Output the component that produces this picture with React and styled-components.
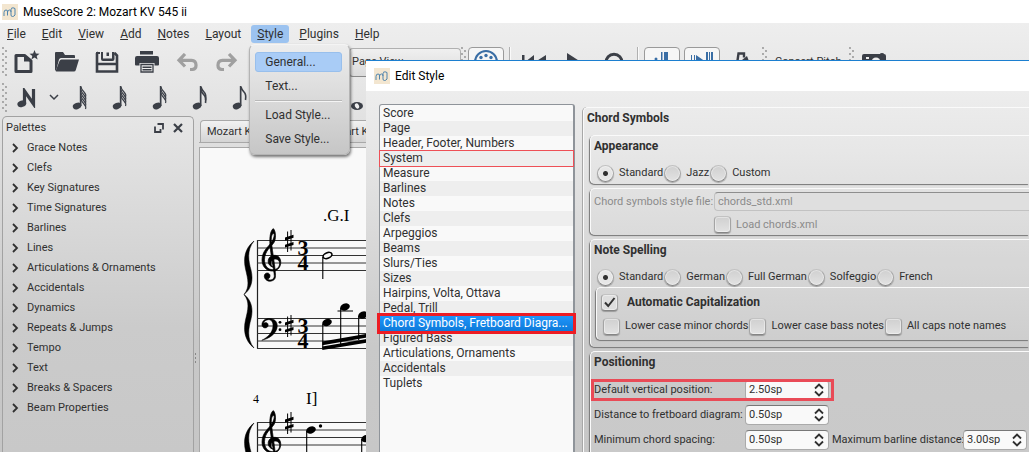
import React from 'react';
import styled, { createGlobalStyle, css } from 'styled-components';

const ui = 'Roboto, "Open Sans", Tahoma, sans-serif';
const ink = '#303030';
const icon = '#3b3f47';
const accent = '#3a6ea5';
const alertRed = '#e94b57';

const GlobalStyle = createGlobalStyle`
  *, *::before, *::after { box-sizing: border-box; }
  body { margin: 0; font: 12px/16px ${ui}; color: ${ink}; overflow: hidden; }
  button, input, select { font: inherit; color: inherit; margin: 0; }
  ul { list-style: none; margin: 0; padding: 0; }
  h2, h3 { margin: 0; font-size: 12px; line-height: 16px; font-weight: 700; }
`;

/* ---------- main window ---------- */

const Window = styled.div`
  position: relative;
  display: flex;
  flex-direction: column;
  height: 100vh;
  overflow: hidden;
  background: linear-gradient(#eeeeee 23px, #e0e0e0 130px, #c8c8c8 340px, #c6c6c6);
`;

const TitleBar = styled.header`
  display: flex;
  align-items: center;
  flex: none;
  gap: 5px;
  height: ${p => p.$height}px;
  padding-left: ${p => p.$inset}px;
  background: #fff;
  color: #000;
  white-space: nowrap;
`;

const MenuBar = styled.nav`
  display: flex;
  flex: none;
  gap: 4px;
  height: 21px;
  padding: 2px 1px 0;
`;

const MenuSlot = styled.div`
  position: relative;
`;

const MenuTitle = styled.button`
  height: 18px;
  padding: 0 6px;
  border: 0;
  border-radius: 3px;
  line-height: 18px;
  background: ${p => (p.$open ? '#9cc3f0' : 'transparent')};
`;

const Popup = styled.div`
  position: absolute;
  z-index: 2;
  top: 19px;
  left: -2px;
  display: flex;
  flex-direction: column;
  width: 101px;
  padding: 7px 7px 1px 5px;
  border: 1px solid #b4b4b4;
  border-top-color: #f4f4f4;
  border-radius: 6px;
  background: linear-gradient(#ededed, #c6c6c6);
  box-shadow: 1px 2px 3px #0008;
`;

const PopupItem = styled.button`
  height: 20px;
  margin-bottom: 4px;
  padding: 0 0 0 9px;
  border: 1px solid ${p => (p.$active ? '#98bfec' : 'transparent')};
  border-radius: 3px;
  background: ${p => (p.$active ? '#a9ccf6' : 'transparent')};
  text-align: left;
  white-space: nowrap;
`;

const PopupRule = styled.hr`
  width: 100%;
  height: 2px;
  margin: 0 0 3px;
  border: 0;
  border-top: 1px solid #b8b8b8;
  border-bottom: 1px solid #f4f4f4;
`;

const ToolBar = styled.div`
  display: flex;
  flex: none;
  align-items: center;
  height: 36px;
  padding-left: 2px;
`;

const GripBox = styled.svg`
  flex: none;
  width: 5px;
  height: 30px;
  fill: #8c8c8c;
`;

const ToolButton = styled.button`
  display: flex;
  flex: none;
  align-items: center;
  justify-content: center;
  width: 36px;
  height: 30px;
  margin: 0 2px;
  padding: 0;
  border: 0;
  border-radius: 4px;
  background: none;
  color: ${p => (p.$muted ? '#a0a0a0' : icon)};
  ${p => p.$on && css`
    border: 1px solid #9a9a9a;
    background: #f6f6f6;
    color: ${accent};
  `}
`;

const ToolText = styled.button`
  flex: none;
  width: 82px;
  height: 30px;
  padding: 0 0 0 8px;
  border: 0;
  background: none;
  font-size: 11px;
  text-align: left;
`;

const ToolRule = styled.span`
  flex: none;
  width: 2px;
  height: 30px;
  margin: 0 3px;
  border-left: 1px solid #b0b0b0;
  border-right: 1px solid #fafafa;
`;

const ToolSelect = styled.select`
  flex: none;
  appearance: none;
  width: ${p => p.$width}px;
  height: 29px;
  margin-left: 2px;
  padding: 0 0 0 2px;
  border: 1px solid #b0b0b0;
  border-bottom-color: #888;
  border-radius: 4px;
  background: linear-gradient(#f0f0f0, #dadada);
  font-size: 11px;
`;

const NoteMenu = styled.button`
  width: 13px;
  height: 30px;
  padding: 0;
  border: 0;
  background: none;
  color: ${icon};
`;

const Workspace = styled.main`
  display: flex;
  flex: 1;
  min-height: 0;
`;

const Dock = styled.aside`
  flex: none;
  width: 192px;
  margin-left: 2px;
  border: 1px solid #a2a2a2;
  border-bottom: 0;
  border-radius: 5px 5px 0 0;
  background: linear-gradient(#e6e6e6, #cbcbcb 210px, #c8c8c8);
`;

const DockHead = styled.div`
  display: flex;
  align-items: center;
  gap: 3px;
  height: 21px;
  padding: 0 7px 0 3px;
  font-size: 11px;
`;

const DockTitle = styled.span`
  flex: 1;
`;

const DockButton = styled.button`
  width: 16px;
  height: 16px;
  padding: 0;
  border: 0;
  background: none;
  line-height: 0;
  color: ${icon};
`;

const PaletteRow = styled.button`
  display: flex;
  align-items: center;
  gap: 6px;
  width: 100%;
  height: 20px;
  padding: 0 0 0 8px;
  border: 0;
  background: none;
  font-size: 11px;
`;

const Splitter = styled.div`
  display: flex;
  align-items: center;
  width: 5px;
  padding-top: 148px;
`;

const Documents = styled.section`
  display: flex;
  flex: 1;
  flex-direction: column;
  min-width: 0;
`;

const TabBar = styled.div`
  display: flex;
  flex: none;
  height: 27px;
  padding: 4px 0 0 1px;
  border-bottom: 1px solid #a8a8a8;
`;

const Tab = styled.button`
  width: 117px;
  padding: 0 0 0 6px;
  border: 1px solid #a8a8a8;
  border-bottom: 0;
  border-radius: 4px 4px 0 0;
  background: linear-gradient(#f2f2f2, #d4d4d4);
  font-size: 11px;
  text-align: left;
  white-space: nowrap;
`;

const Canvas = styled.div`
  flex: 1;
  min-height: 0;
  margin-top: 4px;
  overflow: hidden;
  border-top: 1px solid #a8a8a8;
  border-left: 1px solid #a8a8a8;
  background: #f9f9f9;
`;

/* ---------- dialog ---------- */

const Dialog = styled.section`
  position: absolute;
  z-index: 1;
  top: 60px;
  right: 0;
  bottom: 0;
  left: 366px;
  display: flex;
  flex-direction: column;
  overflow: hidden;
  border-top: 1px solid #1c7fd0;
  background: linear-gradient(#ededed 30px, #e6e6e6 90px, #c9c9c9 285px, #c7c7c7);
`;

const DialogBody = styled.div`
  display: flex;
  flex: 1;
  gap: 8px;
  min-height: 0;
  padding: 13px 0 0 13px;
`;

const PageList = styled.ul`
  flex: none;
  width: 196px;
  border: 1px solid #8f949a;
  border-width: 1px 2px 0 1px;
  border-radius: 3px 3px 0 0;
  background: #f9f9f9;
  padding-top: 1px;
`;

const PageItem = styled.li`
  height: 15px;
  padding-left: 3px;
  line-height: 15px;
  white-space: nowrap;
  &:nth-child(even) { background: #eeeeee; }
  ${p => p.$marked && css`
    position: relative;
    outline: 1px solid #ee5057;
  `}
  && {
    ${p => p.$selected && css`
      position: relative;
      outline: 3px solid #ed1c24;
      background: linear-gradient(#1f95fb, #0d7ada);
      color: #fff;
    `}
  }
`;

const PagePanel = styled.div`
  flex: 1;
  min-width: 0;
  margin-top: 3px;
  padding: 2px 0 0 4px;
  border: 1px solid #fafafa;
  border-width: 1px 0 0 1px;
  border-radius: 5px 0 0 0;
  box-shadow: -1px 0 0 #a8a8a8;
  font-size: 11px;
`;

const Group = styled.fieldset`
  min-width: 0;
  margin: 0 0 4px 2px;
  padding: 0 0 ${p => p.$foot || 0}px 3px;
  border: 1px solid #fafafa;
  border-width: 1px 0 0 1px;
  border-radius: 5px 0 0 5px;
  background: #ffffff0c;
  box-shadow: -1px 1px 1px #777;
`;

const GroupTitle = styled.h3`
  padding-top: 2px;
  height: 27px;
`;

const PanelTitle = styled.h2`
  margin-left: -1px;
  height: 25px;
`;

const Choices = styled.div`
  display: flex;
  align-items: center;
  gap: 1px;
  height: ${p => p.$height || 20}px;
  padding-left: ${p => p.$indent || 0}px;
`;

const Choice = styled.label`
  display: flex;
  align-items: center;
  gap: 5px;
  white-space: nowrap;
  ${p => p.$strong && css`
    gap: 9px;
    font-size: 12px;
    font-weight: 700;
  `}
  ${p => p.$muted && css`color: #8b8b8b;`}
`;

const knob = css`
  appearance: none;
  flex: none;
  width: 17px;
  height: 17px;
  border: 1px solid #a4a4a4;
  border-top-color: #c2c2c2;
  border-bottom-color: #858585;
  background: linear-gradient(#d0d0d0, #e2e2e2);
  box-shadow: 0 1px 1px #0004, inset 0 0 0 1px #ffffff66;
`;

const Radio = styled.input.attrs({ type: 'radio' })`
  ${knob}
  border-radius: 50%;
  &:checked {
    background: radial-gradient(circle, ${ink} 2px, #e6e6e6 3px);
  }
`;

const Check = styled.input.attrs({ type: 'checkbox' })`
  ${knob}
  border-radius: 4px;
  &:checked {
    background: url('data:image/svg+xml,<svg xmlns="http://www.w3.org/2000/svg" viewBox="0 0 15 15"><path d="M3 7.5 6.2 11 12.5 3" fill="none" stroke="%23333" stroke-width="2"/></svg>') #dedede;
  }
`;

const FileGrid = styled.div`
  display: grid;
  grid-template-columns: 117px 1fr;
  column-gap: 3px;
  row-gap: 5px;
  align-items: center;
  padding-top: 3px;
  color: #8b8b8b;
  white-space: nowrap;
`;

const FileField = styled.input`
  width: 100%;
  height: 19px;
  padding: 0 3px;
  border: 1px solid #c2c2c2;
  border-width: 1px 0 1px 1px;
  border-top-color: #8e8e8e;
  border-radius: 4px 0 0 4px;
  background: #dfdfdf;
`;

const FieldRow = styled.div`
  display: flex;
  align-items: center;
  margin-bottom: 3px;
`;

const Field = styled.div`
  display: flex;
  flex: none;
  align-items: center;
  height: 22px;
  margin-left: ${p => (p.$first ? -3 : 0)}px;
  padding: ${p => (p.$first ? '0 3px 0 3px' : '0')};
  ${p => p.$marked && css`
    padding-right: 5px;
    outline: 3px solid ${alertRed};
    outline-offset: -3px;
  `}
`;

const FieldLabel = styled.label`
  width: ${p => p.$width}px;
  white-space: nowrap;
`;

const SpinBox = styled.span`
  display: flex;
  align-items: center;
  width: ${p => p.$width}px;
  height: 20px;
  padding: 0 3px;
  border: 1px solid #aaa;
  border-top-color: #777;
  border-radius: 4px;
  background: #f9f9f9;
`;

const SpinInput = styled.input`
  flex: 1;
  min-width: 0;
  padding: 0;
  border: 0;
  background: none;
`;

const SpinArrows = styled.button`
  width: 12px;
  height: 16px;
  padding: 0;
  border: 0;
  background: none;
  line-height: 0;
`;

/* ---------- drawings ---------- */

const Grip = () => (
  <GripBox viewBox="0 0 5 30" aria-hidden="true">
    {[1, 7, 13, 19, 25].map(y => (
      <g key={y}>
        <circle cx="1" cy={y} r="0.9" />
        <circle cx="4" cy={y + 3} r="0.9" />
      </g>
    ))}
  </GripBox>
);

const AppIcon = () => (
  <svg width="16" height="16" viewBox="0 0 16 16" aria-hidden="true">
    <rect width="16" height="16" fill="#f3e6d0" />
    <path d="M2 12V8.500Q2 6 4 6t1.500 2v3.500M5.500 8Q6 6 7.500 6T9 8v3q0 1.500 1.500 1.500T13 11V4.500M9 8V5" fill="none" stroke="#4f84ad" />
    <path d="M9 4.500q2-1.500 4 0" fill="none" stroke="#4f84ad" />
  </svg>
);

const Svg = ({ w, h, children }) => (
  <svg width={w} height={h} viewBox={`0 0 ${w} ${h}`} fill="currentColor" aria-hidden="true">{children}</svg>
);

const NewIcon = () => (
  <Svg w={26} h={24}>
    <path d="M2 5.500h8.500L17 11v10.500H2z" fill="none" stroke="currentColor" strokeWidth="3" strokeLinejoin="round" />
    <path d="M10 5v6.500h7z" />
    <path d="m20.500 0 1.400 3.400 3.600.3-2.800 2.300.9 3.500-3.100-1.900-3.100 1.900.9-3.500-2.800-2.300 3.600-.3z" />
  </Svg>
);
const OpenIcon = () => (
  <Svg w={26} h={22}>
    <path d="M1 2q0-1 1-1h7l2 3h9q1 0 1 1v2H7q-1.500 0-2 1.500L2.500 18 1 20z" />
    <path d="M7.500 8.500H25L21.800 19q-.4 1.500-2 1.500H2.500q-1 0-.7-1L5.500 10q.5-1.500 2-1.500z" />
  </Svg>
);
const SaveIcon = () => (
  <Svg w={24} h={24}>
    <path d="M2 3v18.500h20V5.500L19.500 3M2 14h20M2 3h1" fill="none" stroke="currentColor" strokeWidth="2.600" />
    <path d="M6 2h2v6.500h9V2h2.500v7q0 2-2 2H8q-2 0-2-2zM11.500 2.500H14V6h-2.500zM1 2h4v2H1z" />
  </Svg>
);
const PrintIcon = () => (
  <Svg w={26} h={24}>
    <path d="M6 1h13v3.500H6zM3 6h20q2 0 2 2v6.500q0 1-1 1h-3.500V13h-15v2.500H2q-1 0-1-1V8q0-2 2-2z" />
    <path d="M7 14.500h12v7.500H7z" fill="#eee" stroke="currentColor" strokeWidth="1.300" />
    <path d="M8.500 16.500h9v1.500h-9zM8.500 19h9v1.500h-9z" />
  </Svg>
);
const ArrowIcon = ({ flip }) => (
  <Svg w={22} h={18}>
    <g transform={flip ? 'translate(22 0) scale(-1 1)' : undefined} fill="none" stroke="currentColor" strokeWidth="3.200">
      <path d="M9 1 3 7.300l6 6.200M4 7.300h11.500Q20 7.500 20 12v.5q0 4-4.500 4H14" />
    </g>
  </Svg>
);
const ReelIcon = () => (
  <Svg w={26} h={26}>
    <circle cx="13" cy="13" r="11" fill="none" stroke="currentColor" strokeWidth="2" />
    {[[13, 6.500], [8, 8.500], [18, 8.500], [5.500, 13], [20.500, 13], [13, 13]].map(([x, y]) => <circle key={`${x}-${y}`} cx={x} cy={y} r="1.700" />)}
  </Svg>
);
const RewindIcon = () => <Svg w={26} h={18}><path d="M1 2h2.500v14H1zM13 2v14L4 9zM25 2v14L14 9z" /></Svg>;
const PlayIcon = () => <Svg w={14} h={20}><path d="M0 1 14 10 0 19z" /></Svg>;
const LoopIcon = () => <Svg w={20} h={22}><path d="M5 17.500A8 8 0 1 1 15 17.500" fill="none" stroke="currentColor" strokeWidth="3" /></Svg>;
const RepeatIcon = () => <Svg w={18} h={20}><path d="M8 0h1.500v20H8zM11 0h4v20h-4z" /><circle cx="3" cy="7" r="1.500" /><circle cx="3" cy="13" r="1.500" /></Svg>;
const PanIcon = () => <Svg w={24} h={20}><path d="M1 3h1v14H1zM4 3h1v14H4zM6 3l10 7-10 7zM16 0h2v20h-2zM19 0h1v20h-1zM21 0h2v20h-2z" /></Svg>;
const MetronomeIcon = () => <Svg w={18} h={20}><path d="M3 19 5.500 1.500H11v4" fill="none" stroke="currentColor" strokeWidth="2.400" /><path d="m9 8 5-4 1.500 4L14 12z" /></Svg>;
const CameraIcon = () => (
  <Svg w={26} h={18}>
    <path d="M3 1h16q0-1 2-1t2 1q2 0 2 2v12q0 2-2 2H3q-2 0-2-2V3q0-2 2-2z" />
    <circle cx="15" cy="9" r="4.500" fill="#eee" /><path d="M5 4h3v2H5z" fill="#eee" />
  </Svg>
);

const NoteInputIcon = () => (
  <Svg w={20} h={20}>
    <path d="M7.500 16V3l9 13V1" fill="none" stroke="currentColor" strokeWidth="3.200" />
    <ellipse cx="4.800" cy="15.800" rx="4.500" ry="3.200" transform="rotate(-20 4.800 15.800)" />
  </Svg>
);
const NoteIcon = ({ flags = 0 }) => (
  <Svg w={16} h={24}>
    <ellipse cx="5.100" cy="20" rx="4.400" ry="3.100" transform="rotate(-20 5.100 20)" />
    <path d="M7.800 0h1.700v20H7.800z" />
    {Array.from({ length: flags }, (_, i) => (
      <path key={i} d={`M9 ${i * 3 + 1}q.5 2.500 3 5t1.500 ${flags > 2 ? 5 : 8}`} fill="none" stroke="currentColor" strokeWidth={flags > 2 ? 1.2 : 1.6} />
    ))}
  </Svg>
);
const WholeIcon = () => (
  <Svg w={20} h={24}>
    <ellipse cx="7" cy="20" rx="6" ry="4" />
    <ellipse cx="7" cy="20" rx="2" ry="2.700" fill="#eee" transform="rotate(-25 7 20)" />
  </Svg>
);
const Chevron = ({ down }) => (
  <Svg w={10} h={10}>
    <path d={down ? 'M1 3l4 4 4-4' : 'M2 1l4 4-4 4'} fill="none" stroke="currentColor" strokeWidth={down ? 1.5 : 1.8} />
  </Svg>
);

const trebleD = 'M272.800 281.500C269 283.500 264.500 281 264.300 277.200C264.200 273.300 269.700 272.800 270 276.700C270.100 278.900 268.500 279.900 267.300 279.800C269 281.900 273.800 281.400 274.300 277.500C274.500 275 272.500 265 271.300 257C270.600 252 269.800 247 269.800 242C269.800 236 271 231 273.300 229.600C276 232 276.200 240 274 243.500C271.500 247.500 264.800 251.500 264.500 260.500C264.400 266.500 267.500 270.700 273 270.700C278 270.700 280 267 279.500 263.500C279 260 274.500 259 272 261.500C270 263.700 271 267 273.800 268.300C269.500 267.800 267.200 263.500 268.600 260C270.300 255.800 276.500 255 279.300 258.500C282.500 262.700 280.500 271.500 273.500 272C266.500 272.500 262 267.500 262 261C262 251.500 269 247.500 272 242.500C273.500 240 275 236 273.800 234.200C271.500 234.800 271 239.500 271.400 243C272.500 253 275.500 270 275.500 276.500C275.500 279.500 274.500 280.800 272.800 281.500Z';
const bassD = 'M261.800 341.300C267 338.500 272.500 334.500 273 327C273.200 322.500 271 320.500 268.200 320.700C265.800 320.900 263.800 322.400 263.600 324.200C266 322.400 268.300 324 268.200 326.200C268 329.900 261.900 330 261.900 325.600C262 321.500 265.500 319.400 269.500 319.500C274.500 319.700 277.500 322.700 277.300 327.200C277 334.500 269 339.800 261.800 341.300Z';
const braceD = 'M254 242C246.500 251 248.500 262 251 271C253.500 281 251.500 290 244 295.500C251.500 301 253.500 310 251 320C248.500 329 246.500 340 254 349C244.500 341.500 243.200 331 245.500 321C248 310.500 250 303 244 295.500C250 288 248 280.500 245.500 270C243.200 260 244.500 249.500 254 242Z';

const Sharp = ({ x, y }) => (
  <g transform={`translate(${x} ${y})`}>
    <path d="M2.600 1.500v20.500M6 0v20.500" stroke="#000" strokeWidth="1" />
    <path d="M0 7.500 8.500 4.800v2.900L0 10.400zM0 14.700 8.500 12v2.900L0 17.600z" />
  </g>
);
const Staff = ({ y }) => (
  <path d={[0, 1, 2, 3, 4].map(i => `M257 ${y + i * 7.5}H900`).join('')} stroke="#333" strokeWidth="1" />
);
const Meter = ({ y }) => (
  <g fontFamily='"Liberation Serif", serif' fontWeight="700" fontSize="22" textAnchor="middle">
    <text x="303" y={y + 15}>3</text>
    <text x="303" y={y + 30}>4</text>
  </g>
);
const Head = ({ x, y }) => <ellipse cx={x} cy={y} rx="5" ry="3.500" transform={`rotate(-22 ${x} ${y})`} />;

const Score = () => (
  <svg width="700" height="304" viewBox="200 149 700 304" role="img" aria-label="Score page">
    <path d="M257.500 241V349.500M257.500 423V453" stroke="#222" strokeWidth="1.200" />
    <Staff y={241.5} />
    <Staff y={319.5} />
    <Staff y={423.5} />
    <path d={braceD} stroke="#000" strokeWidth="0.500" />
    <path d={braceD} stroke="#000" strokeWidth="0.500" transform="translate(0 182)" />
    <path d={trebleD} stroke="#000" strokeWidth="0.700" />
    <path d={trebleD} stroke="#000" strokeWidth="0.700" transform="translate(0 182)" />
    <path d={bassD} stroke="#000" strokeWidth="0.500" />
    <circle cx="280" cy="323.300" r="1.400" /><circle cx="280" cy="330.700" r="1.400" />
    <Sharp x={285} y={231} />
    <Sharp x={285} y={316} />
    <Sharp x={285} y={413} />
    <Meter y={241} />
    <Meter y={319} />
    <ellipse cx="327.500" cy="256.500" rx="4.600" ry="2.800" transform="rotate(-22 327.500 256.500)" fill="#f9f9f9" stroke="#000" strokeWidth="1.600" />
    <path d="M322.800 258v22M322.800 325v24M340.700 309v36M358.700 317v24M337.500 312h15.500M306.700 432v21M361.700 440v13" stroke="#000" strokeWidth="1.100" />
    <Head x={327} y={323.5} />
    <Head x={345} y={308} />
    <Head x={363} y={316} />
    <path d="M322.300 342.500 380 332.400v3.800L322.300 346.300zM322.300 347.500 380 337.800v3.800L322.300 351z" />
    <Head x={311} y={431} />
    <circle cx="320.500" cy="427" r="1.700" />
    <Head x={366} y={439.5} />
    <g fontFamily='"Liberation Serif", serif' fontSize="17">
      <text x="323" y="222">.G.I</text>
      <text x="306" y="405">I]</text>
      <text x="253" y="404" fontSize="12">4</text>
    </g>
  </svg>
);

/* ---------- content ---------- */

const menus = ['File', 'Edit', 'View', 'Add', 'Notes', 'Layout', 'Style', 'Plugins', 'Help'];

const palettes = [
  'Grace Notes', 'Clefs', 'Key Signatures', 'Time Signatures', 'Barlines', 'Lines',
  'Articulations & Ornaments', 'Accidentals', 'Dynamics', 'Repeats & Jumps', 'Tempo',
  'Text', 'Breaks & Spacers', 'Beam Properties',
];

const pages = [
  'Score', 'Page', 'Header, Footer, Numbers', 'System', 'Measure', 'Barlines', 'Notes',
  'Clefs', 'Arpeggios', 'Beams', 'Slurs/Ties', 'Sizes', 'Hairpins, Volta, Ottava',
  'Pedal, Trill', 'Chord Symbols, Fretboard Diagra...', 'Figured Bass',
  'Articulations, Ornaments', 'Accidentals', 'Tuplets',
];

const RadioRow = ({ name, options }) => (
  <Choices $indent={3}>
    {options.map((text, i) => (
      <Choice key={text}><Radio name={name} defaultChecked={i === 0} />{text}</Choice>
    ))}
  </Choices>
);

const Spin = ({ id, label, value, labelWidth, width, first, marked }) => (
  <Field $first={first} $marked={marked}>
    <FieldLabel htmlFor={id} $width={labelWidth}>{label}</FieldLabel>
    <SpinBox $width={width}>
      <SpinInput id={id} defaultValue={value} />
      <SpinArrows aria-label={`Step ${label}`}>
        <Svg w={12} h={16}>
          <path d="M2 6.500 6 2.500l4 4M2 9.500l4 4 4-4" fill="none" stroke="currentColor" strokeWidth="1.800" />
        </Svg>
      </SpinArrows>
    </SpinBox>
  </Field>
);

const StyleMenu = () => (
  <Popup role="menu">
    <PopupItem role="menuitem" $active>General...</PopupItem>
    <PopupItem role="menuitem">Text...</PopupItem>
    <PopupRule />
    <PopupItem role="menuitem">Load Style...</PopupItem>
    <PopupItem role="menuitem">Save Style...</PopupItem>
  </Popup>
);

const EditStyle = () => (
  <Dialog role="dialog" aria-label="Edit Style">
    <TitleBar $height={30} $inset={8}><AppIcon />Edit Style</TitleBar>
    <DialogBody>
      <PageList role="listbox" aria-label="Style pages">
        {pages.map((page, i) => (
          <PageItem key={page} role="option" aria-selected={i === 14} $marked={i === 3} $selected={i === 14}>{page}</PageItem>
        ))}
      </PageList>
      <PagePanel>
        <PanelTitle>Chord Symbols</PanelTitle>
        <Group $foot={1}>
          <GroupTitle>Appearance</GroupTitle>
          <RadioRow name="appearance" options={['Standard', 'Jazz', 'Custom']} />
        </Group>
        <Group $foot={2}>
          <FileGrid>
            <label htmlFor="style-file">Chord symbols style file:</label>
            <FileField id="style-file" defaultValue="chords_std.xml" />
            <span />
            <Choice $muted><Check disabled />Load chords.xml</Choice>
          </FileGrid>
        </Group>
        <Group $foot={3}>
          <GroupTitle>Note Spelling</GroupTitle>
          <RadioRow name="spelling" options={['Standard', 'German', 'Full German', 'Solfeggio', 'French']} />
          <Group $foot={4}>
            <Choices $height={28} $indent={1}><Choice $strong><Check defaultChecked />Automatic Capitalization</Choice></Choices>
            <Choices $indent={3}>
              {['Lower case minor chords', 'Lower case bass notes', 'All caps note names'].map(text => (
                <Choice key={text}><Check />{text}</Choice>
              ))}
            </Choices>
          </Group>
        </Group>
        <Group $foot={40}>
          <GroupTitle>Positioning</GroupTitle>
          <FieldRow><Spin first marked id="vertical" label="Default vertical position:" value="2.50sp" labelWidth={151} width={84} /></FieldRow>
          <FieldRow><Spin first id="fretboard" label="Distance to fretboard diagram:" value="0.50sp" labelWidth={151} width={84} /></FieldRow>
          <FieldRow>
            <Spin first id="spacing" label="Minimum chord spacing:" value="0.50sp" labelWidth={151} width={84} />
            <Spin id="barline" label="Maximum barline distance:" value="3.00sp" labelWidth={131} width={64} />
          </FieldRow>
        </Group>
      </PagePanel>
    </DialogBody>
  </Dialog>
);

export default function App() {
  return (
    <Window>
      <GlobalStyle />
      <TitleBar $height={23} $inset={2}><AppIcon />MuseScore 2: Mozart KV 545 ii</TitleBar>
      <MenuBar>
        {menus.map(name => (
          <MenuSlot key={name}>
            <MenuTitle $open={name === 'Style'}><u>{name[0]}</u>{name.slice(1)}</MenuTitle>
            {name === 'Style' && <StyleMenu />}
          </MenuSlot>
        ))}
      </MenuBar>
      <ToolBar>
        <Grip />
        <ToolButton aria-label="New"><NewIcon /></ToolButton>
        <ToolButton aria-label="Open"><OpenIcon /></ToolButton>
        <ToolButton aria-label="Save"><SaveIcon /></ToolButton>
        <ToolButton aria-label="Print"><PrintIcon /></ToolButton>
        <ToolButton aria-label="Undo" $muted><ArrowIcon /></ToolButton>
        <ToolButton aria-label="Redo" $muted><ArrowIcon flip /></ToolButton>
        <ToolSelect aria-label="Zoom" $width={98}><option>100%</option></ToolSelect>
        <ToolSelect aria-label="View mode" $width={112}><option>Page View</option></ToolSelect>
        <Grip />
        <ToolButton aria-label="Play panel" $on><ReelIcon /></ToolButton>
        <ToolRule />
        <ToolButton aria-label="Rewind"><RewindIcon /></ToolButton>
        <ToolButton aria-label="Play"><PlayIcon /></ToolButton>
        <ToolButton aria-label="Loop"><LoopIcon /></ToolButton>
        <ToolRule />
        <ToolButton aria-label="Repeats" $on><RepeatIcon /></ToolButton>
        <ToolButton aria-label="Pan score" $on><PanIcon /></ToolButton>
        <ToolButton aria-label="Metronome"><MetronomeIcon /></ToolButton>
        <Grip />
        <ToolText>Concert Pitch</ToolText>
        <Grip />
        <ToolButton aria-label="Image capture"><CameraIcon /></ToolButton>
      </ToolBar>
      <ToolBar>
        <Grip />
        <ToolButton aria-label="Note input"><NoteInputIcon /></ToolButton>
        <NoteMenu aria-label="Note input mode"><Chevron down /></NoteMenu>
        {[5, 4, 3, 2, 1, 0, 0].map((flags, i) => (
          <ToolButton key={i} aria-label={`Duration ${i + 1}`}><NoteIcon flags={flags} /></ToolButton>
        ))}
        <ToolButton aria-label="Whole note"><WholeIcon /></ToolButton>
      </ToolBar>
      <Workspace>
        <Dock>
          <DockHead>
            <DockTitle>Palettes</DockTitle>
            <DockButton aria-label="Float">
              <Svg w={10} h={10}><path d="M3.500 1H9v5.500M1 3.500V9h5.500V6" fill="none" stroke="currentColor" strokeWidth="1.800" /></Svg>
            </DockButton>
            <DockButton aria-label="Close">
              <Svg w={10} h={10}><path d="m1 1 8 8m0-8L1 9" stroke="currentColor" strokeWidth="2.200" /></Svg>
            </DockButton>
          </DockHead>
          {palettes.map(name => <PaletteRow key={name}><Chevron />{name}</PaletteRow>)}
        </Dock>
        <Splitter><Svg w={4} h={10}><path d="M1 0h1v2H1zM1 4h1v2H1zM1 8h1v2H1z" fill="#888" /></Svg></Splitter>
        <Documents>
          <TabBar>
            <Tab>Mozart KV 545 ii</Tab>
            <Tab>Mozart KV 545 ii</Tab>
          </TabBar>
          <Canvas><Score /></Canvas>
        </Documents>
      </Workspace>
      <EditStyle />
    </Window>
  );
}
